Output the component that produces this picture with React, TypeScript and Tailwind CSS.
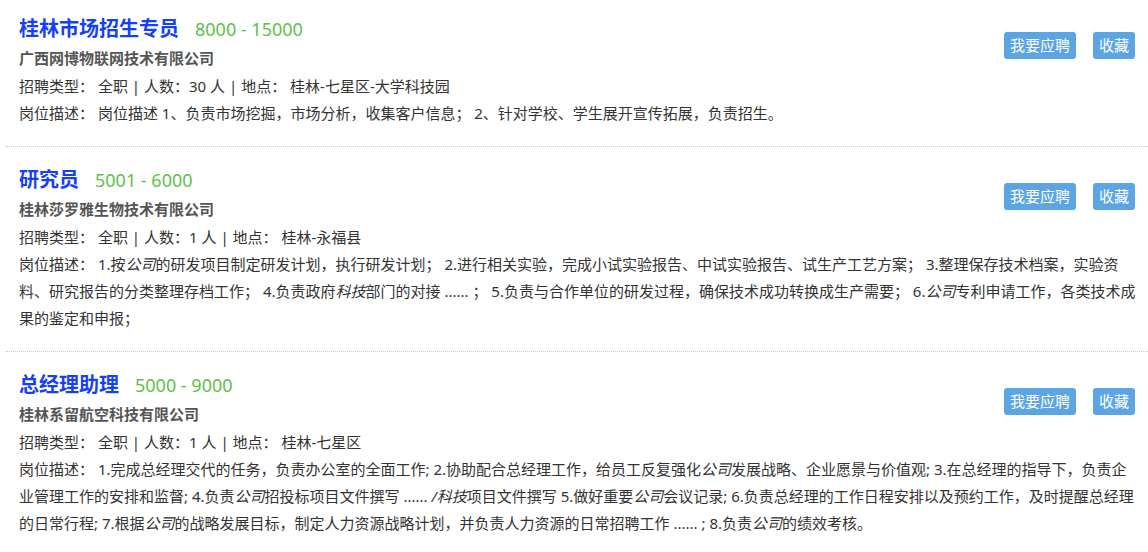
import React from 'react';

type Job = {
  title: string;
  salary: string;
  company: string;
  type: string;
  count: string;
  place: string;
  desc: React.ReactNode;
};

const Em = ({ children }: { children: React.ReactNode }) => <em className="italic">{children}</em>;

const jobs: Job[] = [
  {
    title: '桂林市场招生专员',
    salary: '8000 - 15000',
    company: '广西网博物联网技术有限公司',
    type: '全职',
    count: '30',
    place: '桂林-七星区-大学科技园',
    desc: <>岗位描述 1、负责市场挖掘，市场分析，收集客户信息； 2、针对学校、学生展开宣传拓展，负责招生。</>,
  },
  {
    title: '研究员',
    salary: '5001 - 6000',
    company: '桂林莎罗雅生物技术有限公司',
    type: '全职',
    count: '1',
    place: '桂林-永福县',
    desc: (
      <>
        1.按<Em>公司</Em>的研发项目制定研发计划，执行研发计划； 2.进行相关实验，完成小试实验报告、中试实验报告、试生产工艺方案； 3.整理保存技术档案，实验资料、研究报告的分类整理存档工作； 4.负责政府<Em>科技</Em>部门的对接 ...... ； 5.负责与合作单位的研发过程，确保技术成功转换成生产需要； 6.<Em>公司</Em>专利申请工作，各类技术成果的鉴定和申报；
      </>
    ),
  },
  {
    title: '总经理助理',
    salary: '5000 - 9000',
    company: '桂林系留航空科技有限公司',
    type: '全职',
    count: '1',
    place: '桂林-七星区',
    desc: (
      <>
        1.完成总经理交代的任务，负责办公室的全面工作; 2.协助配合总经理工作，给员工反复强化<Em>公司</Em>发展战略、企业愿景与价值观; 3.在总经理的指导下，负责企业管理工作的安排和监督; 4.负责<Em>公司</Em>招投标项目文件撰写 ...... <Em>/科技</Em>项目文件撰写 5.做好重要<Em>公司</Em>会议记录; 6.负责总经理的工作日程安排以及预约工作，及时提醒总经理的日常行程; 7.根据<Em>公司</Em>的战略发展目标，制定人力资源战略计划，并负责人力资源的日常招聘工作 ...... ; 8.负责<Em>公司</Em>的绩效考核。
      </>
    ),
  },
];

const JobItem = ({ job }: { job: Job }) => (
  <div className="ml-[6px] border-b border-dotted border-[#c8c8c8] pl-[13px] pr-[8px] pt-[18px] pb-[19px]">
    <div className="flex items-start">
      <div className="flex-1">
        <div className="flex items-baseline leading-[30px]">
          <span className="text-[20px] font-bold text-[#1440f8]">{job.title}</span>
          <span className="ml-[16px] text-[18px] text-[#5fbf4a]">{job.salary}</span>
        </div>
        <div className="text-[15px] font-bold leading-[28px] text-[#555]">{job.company}</div>
        <div className="text-[15px] leading-[28px] text-[#333]">
          招聘类型： {job.type} | 人数：{job.count} 人 | 地点： {job.place}
        </div>
      </div>
      <div className="mt-[18px] mr-[5px] flex gap-[17px]">
        <button className="rounded-[3px] bg-[#5ba5e3] px-[6px] text-[15px] leading-[27px] text-white">我要应聘</button>
        <button className="rounded-[3px] bg-[#5ba5e3] px-[6px] text-[15px] leading-[27px] text-white">收藏</button>
      </div>
    </div>
    <div className="text-[15px] leading-[27px] text-[#333]">
      岗位描述： {job.desc}
    </div>
  </div>
);

export default function App() {
  return (
    <div
      className="h-[552px] w-[1148px] overflow-hidden bg-white"
      style={{ fontFamily: '"Noto Sans", "Noto Sans CJK SC", sans-serif' }}
    >
      <div className="-mt-[4px]">
        {jobs.map((job) => (
          <JobItem key={job.title} job={job} />
        ))}
      </div>
    </div>
  );
}
